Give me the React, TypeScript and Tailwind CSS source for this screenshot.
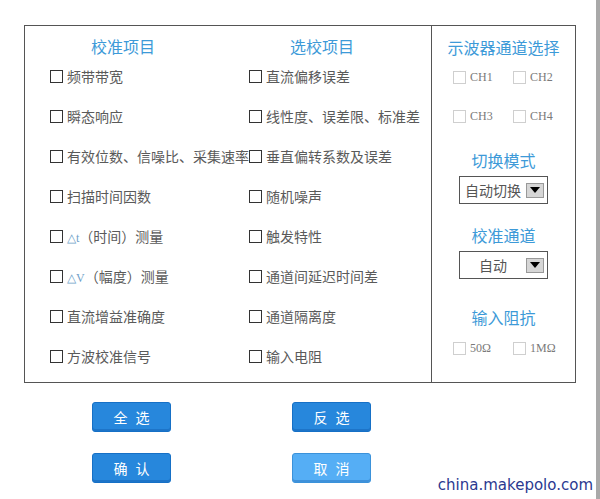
const cjk = "font-['Noto_Sans_CJK_SC',sans-serif]";

const leftItems = [
  "频带带宽",
  "瞬态响应",
  "有效位数、信噪比、采集速率",
  "扫描时间因数",
  "△t（时间）测量",
  "△V（幅度）测量",
  "直流增益准确度",
  "方波校准信号",
];

const rightItems = [
  "直流偏移误差",
  "线性度、误差限、标准差",
  "垂直偏转系数及误差",
  "随机噪声",
  "触发特性",
  "通道间延迟时间差",
  "通道隔离度",
  "输入电阻",
];

function Box() {
  return <span className="w-[13px] h-[13px] shrink-0 border-[1.5px] border-[#333] bg-white" />;
}

function Label({ text }: { text: string }) {
  if (text.startsWith("△")) {
    const sym = text.slice(0, 2);
    return (
      <span className="whitespace-nowrap">
        <span className="text-[12px] text-[#6f9fc9] font-['Liberation_Serif',serif]">{sym}</span>
        {text.slice(2)}
      </span>
    );
  }
  return <span className="whitespace-nowrap">{text}</span>;
}

function Column({ title, items }: { title: string; items: string[] }) {
  return (
    <div className="w-[200px] flex flex-col">
      <div className="mt-[10px] h-[20px] leading-[20px] pl-[41px] text-[16px] text-[#3d9ad8]">{title}</div>
      {items.map((t) => (
        <div key={t} className="h-[40px] flex items-center gap-[4px] text-[14px] text-[#5a5a5a]">
          <Box />
          <Label text={t} />
        </div>
      ))}
    </div>
  );
}

function Check({ label }: { label: string }) {
  return (
    <div className="w-[60px] flex items-center gap-[4px]">
      <span className="w-[13px] h-[13px] border border-[#cfcfcf] bg-white" />
      <span className="text-[12px] text-[#7a7a7a] font-['Liberation_Serif',serif]">{label}</span>
    </div>
  );
}

function Select({ value }: { value: string }) {
  return (
    <div className="ml-[27px] w-[89px] h-[28px] border-[1.5px] border-[#555] flex items-center">
      <span className="flex-1 text-center text-[14px] text-[#555]">{value}</span>
      <span className="mr-[3px] w-[18px] h-[15px] bg-[#d6d6d6] border border-[#999] flex items-center justify-center">
        <svg width="10" height="6" viewBox="0 0 10 6">
          <path d="M0 0H10L5 6Z" fill="#000" />
        </svg>
      </span>
    </div>
  );
}

function Heading({ text, className }: { text: string; className: string }) {
  return <div className={`text-center text-[16px] leading-[20px] text-[#3d9ad8] ${className}`}>{text}</div>;
}

function Btn({ text, light }: { text: string; light?: boolean }) {
  return (
    <button
      className={`w-[79px] h-[30px] rounded-[3px] border text-white text-[14px] tracking-[8px] pl-[8px] ${
        light ? "bg-[#55aef5] border-[#3b92da]" : "bg-[#2787dc] border-[#1670c6]"
      } shadow-[inset_0_-2px_0_rgba(0,60,140,0.25)]`}
    >
      {text}
    </button>
  );
}

export default function App() {
  return (
    <div className={`relative w-[600px] h-[499px] bg-white flex ${cjk}`}>
      <div className="w-[596px] pt-[25px] pl-[24px]">
        <div className="w-[552px] h-[358px] border border-[#555] flex">
          <div className="w-[407px] border-r border-[#555] flex pl-[25px]">
            <Column title="校准项目" items={leftItems} />
            <Column title="选校项目" items={rightItems} />
          </div>
          <div className="flex-1 flex flex-col">
            <Heading text="示波器通道选择" className="mt-[11px]" />
            <div className="flex flex-col pl-[21px]">
              <div className="h-[40px] flex items-center">
                <Check label="CH1" />
                <Check label="CH2" />
              </div>
              <div className="h-[40px] flex items-center -mt-[1px]">
                <Check label="CH3" />
                <Check label="CH4" />
              </div>
            </div>
            <Heading text="切换模式" className="mt-[14px]" />
            <div className="mt-[6px]">
              <Select value="自动切换" />
            </div>
            <Heading text="校准通道" className="mt-[21px]" />
            <div className="mt-[6px]">
              <Select value="自动" />
            </div>
            <Heading text="输入阻抗" className="mt-[28px]" />
            <div className="mt-[11px] h-[20px] flex items-center pl-[21px]">
              <Check label="50Ω" />
              <Check label="1MΩ" />
            </div>
          </div>
        </div>
        <div className="mt-[19px] ml-[68px] grid grid-cols-[79px_79px] gap-x-[121px] gap-y-[21px]">
          <Btn text="全选" />
          <Btn text="反选" />
          <Btn text="确认" />
          <Btn text="取消" light />
        </div>
      </div>
      <div className="w-[4px] bg-[#a9a9a9]" />
      <div className="absolute right-[7px] bottom-[3px] text-[15px] text-[#2b3990] font-['DejaVu_Sans',sans-serif]">
        china.makepolo.com
      </div>
    </div>
  );
}
